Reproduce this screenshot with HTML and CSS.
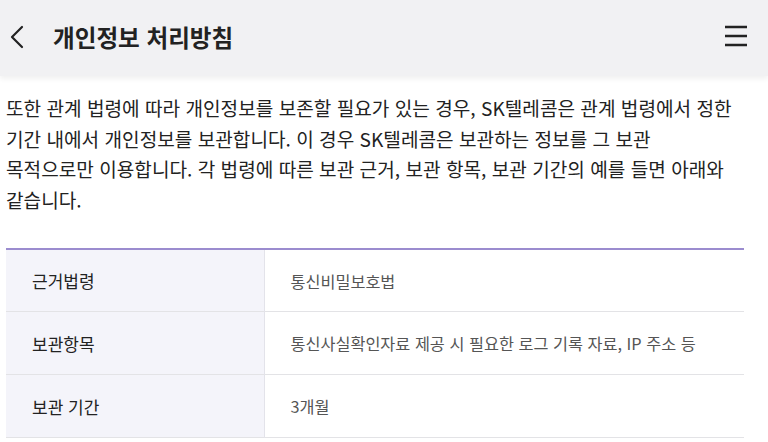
FILE: index.html
```html
<!DOCTYPE html>
<html lang="ko">
<head>
    <meta charset="UTF-8">
    <meta name="viewport" content="width=device-width, initial-scale=1.0">
    <title>개인정보 처리방침</title>
    <link rel="stylesheet" href="styles.css">
</head>
<body>
    <header class="header">
        <a href="#" class="back">
            <svg width="16" height="24" viewBox="0 0 16 24" fill="none">
                <path d="M13 2L3 12l10 10" stroke="#222" stroke-width="2.2" stroke-linecap="round" stroke-linejoin="round"/>
            </svg>
        </a>
        <h1 class="title">개인정보 처리방침</h1>
        <button class="menu">
            <svg width="24" height="22" viewBox="0 0 24 22" fill="none">
                <path d="M1 2h22M1 11h22M1 20h22" stroke="#222" stroke-width="2.4"/>
            </svg>
        </button>
    </header>

    <main class="content">
        <p class="desc">
            또한 관계 법령에 따라 개인정보를 보존할 필요가 있는 경우, SK텔레콤은 관계 법령에서 정한<br>
            기간 내에서 개인정보를 보관합니다. 이 경우 SK텔레콤은 보관하는 정보를 그 보관<br>
            목적으로만 이용합니다. 각 법령에 따른 보관 근거, 보관 항목, 보관 기간의 예를 들면 아래와<br>
            같습니다.
        </p>

        <table class="info-table">
            <tr>
                <th>근거법령</th>
                <td>통신비밀보호법</td>
            </tr>
            <tr>
                <th>보관항목</th>
                <td>통신사실확인자료 제공 시 필요한 로그 기록 자료, IP 주소 등</td>
            </tr>
            <tr>
                <th>보관 기간</th>
                <td>3개월</td>
            </tr>
        </table>
    </main>
</body>
</html>
```

FILE: styles.css
```css
* {
    margin: 0;
    padding: 0;
    box-sizing: border-box;
}

body {
    font-family: 'Noto Sans CJK KR', 'Noto Sans', sans-serif;
    background: #fff;
    color: #222;
    width: 768px;
    height: 442px;
    overflow: hidden;
}

.header {
    height: 76px;
    display: flex;
    align-items: center;
    padding: 0 20px 2px 9px;
    background: #f1f1f3;
    box-shadow: 0 3px 5px rgba(0, 0, 0, 0.06);
    position: relative;
    z-index: 1;
}

.back {
    display: flex;
    align-items: center;
    width: 44px;
}

.title {
    flex: 1;
    font-size: 23.6px;
    font-weight: 700;
    color: #222;
}

.menu {
    background: none;
    border: none;
    display: flex;
    margin-top: -2px;
}

.content {
    padding: 17px 24px 0 6px;
}

.desc {
    font-size: 19.1px;
    line-height: 30.7px;
    color: #222;
    white-space: nowrap;
}

.info-table {
    width: 738px;
    margin-top: 32px;
    border-collapse: collapse;
    border-top: 2px solid #9b8ccf;
}

.info-table tr {
    height: 63px;
    border-bottom: 1px solid #e3e3e6;
}

.info-table th {
    width: 258px;
    background: #f4f4fa;
    border-right: 1px solid #e3e3ea;
    text-align: left;
    padding-left: 26px;
    font-size: 17px;
    font-weight: 400;
    color: #222;
}

.info-table td {
    padding-left: 26px;
    font-size: 16.3px;
    color: #555;
}
```
